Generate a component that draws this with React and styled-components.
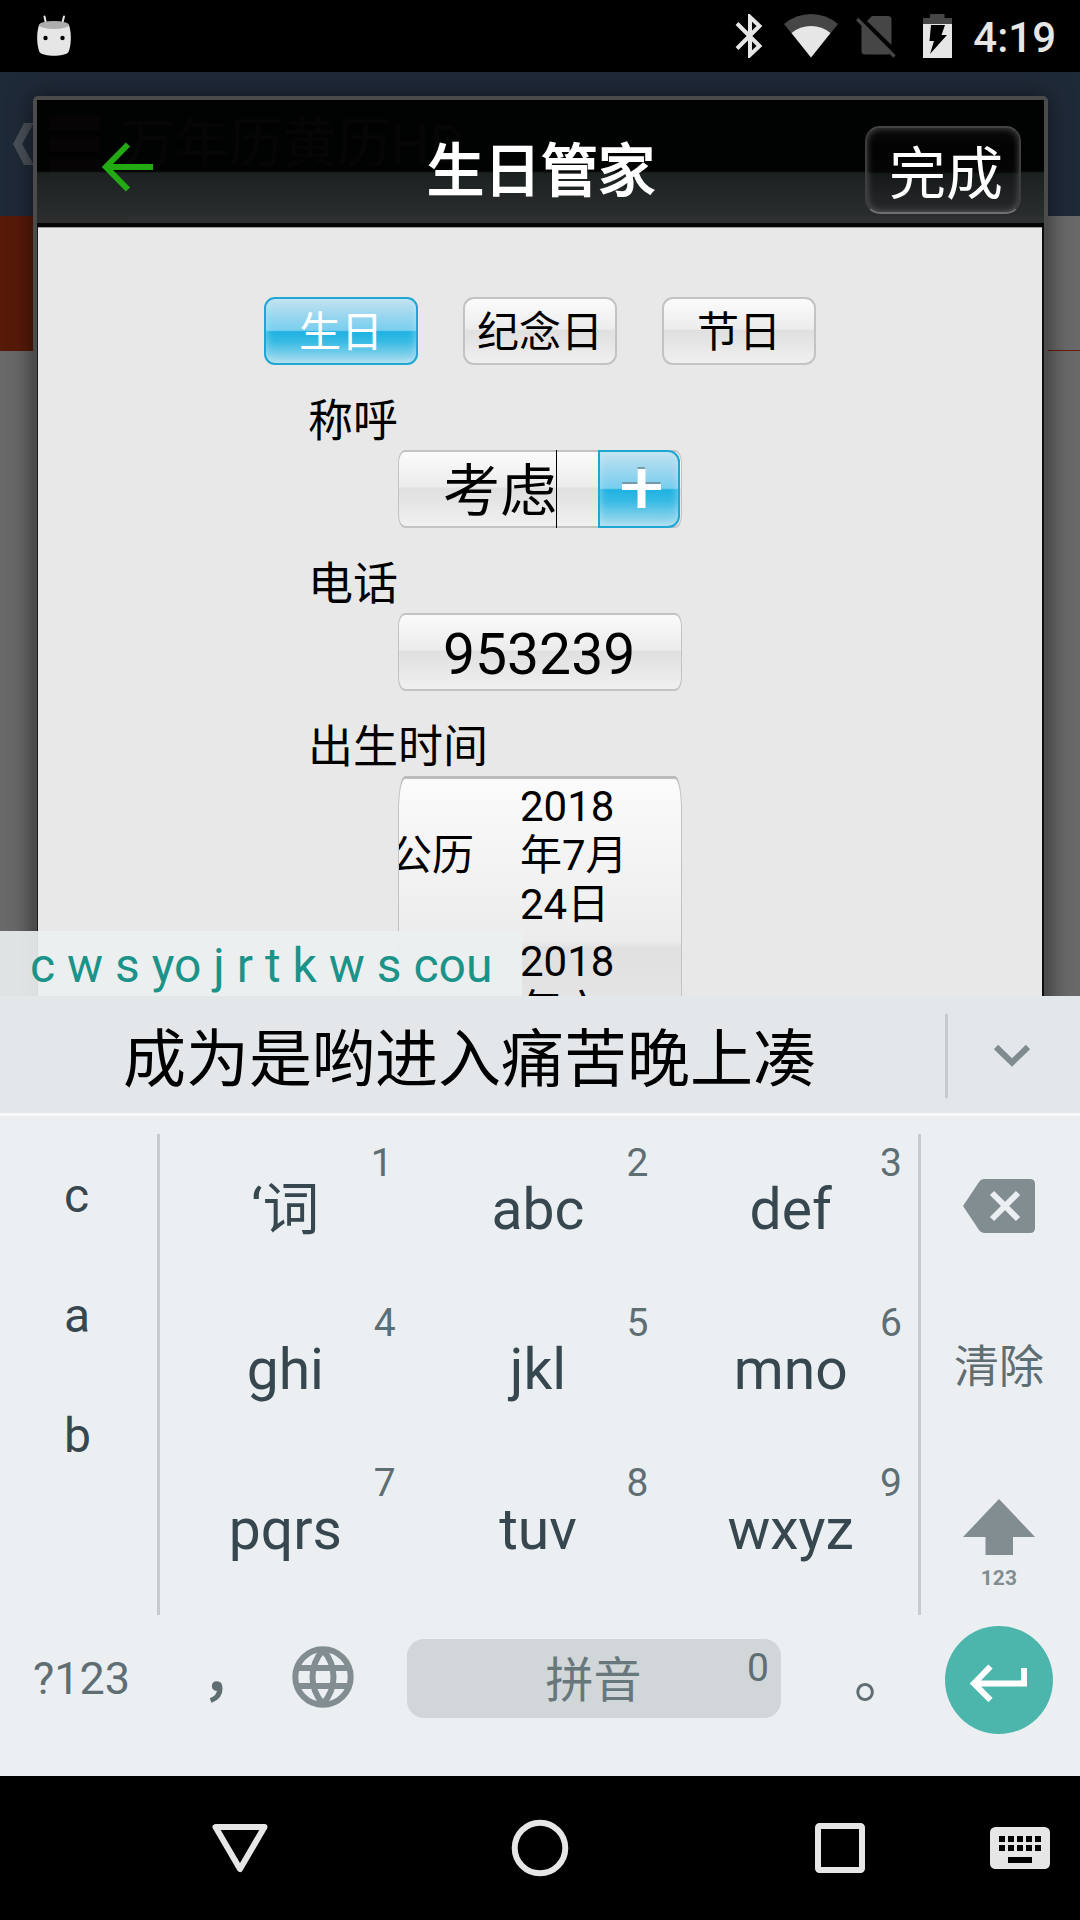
import React from "react";
import styled, { createGlobalStyle, css } from "styled-components";

const GlobalStyle = createGlobalStyle`
  * { box-sizing: border-box; }
  body {
    margin: 0;
    background: #000;
    font-family: Roboto, "Noto Sans CJK SC", sans-serif;
  }
  svg { display: block; flex: none; }
`;

/* ---------- screen ---------- */

const Screen = styled.div`
  width: 1080px;
  height: 1920px;
  display: flex;
  flex-direction: column;
  overflow: hidden;
  background: #000;
`;

const StatusBar = styled.header`
  height: 72px;
  flex: none;
  display: flex;
  align-items: center;
  justify-content: space-between;
  padding: 0 24px 0 36px;
  background: #000;
`;

const StatusIcons = styled.div`
  display: flex;
  align-items: center;
`;

const Clock = styled.span`
  margin-left: 21px;
  padding-top: 3px;
  font-size: 42px;
  line-height: 50px;
  font-weight: 500;
  color: #e6e6e6;
`;

const AppArea = styled.main`
  position: relative;
  height: 924px;
  flex: none;
  overflow: hidden;
  background: #696969;
`;

/* ---------- dimmed page behind the dialog ---------- */

const BackBar = styled.div`
  height: 144px;
  display: flex;
  align-items: center;
  padding-left: 12px;
  background: #1f2a38;
`;

const BackMenu = styled.div`
  display: flex;
  flex-direction: column;
  gap: 7px;
  width: 51px;
  margin-left: 15px;
`;

const BackMenuLine = styled.div`
  height: 15px;
  background: #a06060;
`;

const BackTitle = styled.div`
  margin-left: 21px;
  padding-top: 2px;
  font-size: 54px;
  line-height: 64px;
  color: #8a8a8a;
`;

const BackTabs = styled.div`
  height: 135px;
  display: flex;
  border-bottom: 1px solid #6a1c08;
`;

const BackTab = styled.div`
  width: 127px;
  height: 135px;
  background: #571a09;
`;

/* ---------- dialog ---------- */

const Dialog = styled.section`
  position: absolute;
  left: 33px;
  right: 32px;
  top: 24px;
  height: 1000px;
  border: 4px solid #4b4b4b;
  border-radius: 5px;
  padding: 0 2px 0 1px;
  display: flex;
  flex-direction: column;
  box-shadow: 0 0 24px rgba(0, 0, 0, 0.55);
`;

const DialogHeader = styled.div`
  height: 127px;
  flex: none;
  display: grid;
  grid-template-columns: 177px 1fr 177px;
  margin: 0 -2px 0 -1px;
  padding: 0 2px 0 1px;
  border-bottom: 4px solid #050505;
  background: linear-gradient(
    to bottom,
    rgba(0, 0, 0, 0.96) 0,
    rgba(0, 0, 0, 0.96) 71px,
    rgba(27, 32, 32, 0.96) 73px,
    rgba(44, 47, 48, 0.96) 123px
  );
`;

const BackButton = styled.div`
  padding: 42px 0 0 64px;
`;

const DialogTitle = styled.h1`
  margin: 0;
  padding: 37px 0 0 2px;
  font-size: 57px;
  line-height: 70px;
  font-weight: 400;
  text-align: center;
  color: #fff;
  -webkit-text-stroke: 2px #fff;
`;

const DoneButton = styled.button`
  justify-self: end;
  width: 156px;
  height: 88px;
  margin: 26px 21px 0 0;
  padding: 9px 0 0 6px;
  border: 2px solid #3c3d3e;
  border-top-color: #444;
  border-bottom-color: #6e7071;
  border-radius: 15px;
  background: linear-gradient(to bottom, #0a0a0a, #020202 25%, #060606 52%, #16191a 55%, #27292a);
  box-shadow: inset 0 0 7px rgba(150, 150, 150, 0.5);
  font: 400 57px/70px Roboto, "Noto Sans CJK SC", sans-serif;
  color: #fff;
`;

const DialogBody = styled.div`
  flex: 1;
  padding-top: 69px;
  border-top: 1px solid #9b9b9b;
  background: #e9e8e8;
  box-shadow: 2px 0 0 #0c0e0e, -1px 0 0 #1a1a1a;
`;

const glossLight = css`
  border: 2px solid #c3c3c3;
  background: linear-gradient(to bottom, #fbfbfb 0, #ececec 47%, #e0e0e0 49%, #e3e3e3 60%, #f0f0f0 100%);
`;

const glossBlue = css`
  border: 2px solid #1fa6d3;
  background: linear-gradient(to bottom, #c2e2f0 0, #9dd7ef 24%, #78ceef 49%, #1fb2e2 51%, #36bae4 66%, #a9dcee 100%);
  box-shadow: inset 0 0 9px rgba(200, 235, 248, 0.6);
`;

const Tabs = styled.div`
  display: flex;
  justify-content: center;
  gap: 45px;
`;

const Tab = styled.button`
  width: 154px;
  height: 68px;
  padding: 3px 0 0;
  border-radius: 11px;
  font: 400 42px/50px Roboto, "Noto Sans CJK SC", sans-serif;
  ${(p) => (p.$active ? glossBlue : glossLight)}
  color: ${(p) => (p.$active ? "#fff" : "#000")};
`;

const Form = styled.div`
  margin-left: 270px;
`;

const Label = styled.label`
  display: block;
  padding-top: 29px;
  font-size: 45px;
  line-height: 56px;
  color: #000;
`;

const Field = styled.div`
  ${glossLight}
  border-left-width: 1px;
  border-right-width: 1px;
  width: 284px;
  height: 78px;
  margin-left: 90px;
  display: flex;
  align-items: stretch;
  border-radius: 7px / 13px;
`;

const FieldText = styled.span`
  padding: 4px 0 0 44px;
  flex: 1;
  font-size: 57px;
  line-height: 72px;
  white-space: nowrap;
`;

const Typed = styled.span`
  display: inline-block;
  height: 78px;
  margin-top: -6px;
  padding-top: 6px;
  margin-right: -1px;
  width: 114px;
  border-right: 1px solid #000;
`;

const AddButton = styled.button`
  ${glossBlue}
  width: 82px;
  height: 78px;
  margin: -2px 1px -2px 0;
  padding: 0 0 3px 3px;
  flex: none;
  display: flex;
  align-items: center;
  justify-content: center;
  border-radius: 0 12px 12px 0;
`;

const DateField = styled(Field)`
  height: 350px;
  border-top: 3px solid #bcbcbc;
  border-radius: 7px / 34px;
  overflow: hidden;
`;

const CalendarKind = styled.div`
  width: 84px;
  margin: 56px 0 0 -9px;
  font-size: 42px;
  line-height: 42px;
  white-space: nowrap;
`;

const Dates = styled.div`
  width: 110px;
  margin-left: 46px;
  padding-top: 3px;
  display: flex;
  flex-direction: column;
  gap: 8px;
`;

const DateText = styled.div`
  font-size: 42px;
  line-height: 49px;
  white-space: nowrap;
`;

/* ---------- keyboard ---------- */

const Composing = styled.div`
  position: absolute;
  left: 0;
  bottom: 0;
  width: 522px;
  height: 65px;
  padding: 5px 0 0 30px;
  background: rgba(236, 240, 241, 0.91);
  font-size: 48px;
  line-height: 60px;
  color: #1b9389;
  white-space: nowrap;
`;

const Keyboard = styled.section`
  height: 780px;
  flex: none;
  display: flex;
  flex-direction: column;
  background: #ebeff2;
`;

const Candidates = styled.div`
  height: 120px;
  flex: none;
  display: flex;
  align-items: center;
  padding-top: 3px;
  border-bottom: 3px solid #f6f8f9;
  background: #e3e7ea;
`;

const CandidateText = styled.div`
  width: 945px;
  padding-top: 7px;
  padding-right: 6px;
  font-size: 63px;
  line-height: 80px;
  text-align: center;
  color: #000;
`;

const Rule = styled.div`
  width: 3px;
  height: ${(p) => p.$height}px;
  flex: none;
  background: #c6cbce;
`;

const Expand = styled.div`
  flex: 1;
  display: flex;
  justify-content: center;
  padding-right: 4px;
`;

const Pad = styled.div`
  height: 481px;
  margin-top: 18px;
  flex: none;
  display: grid;
  grid-template-columns: 157px 3px 758px 3px 159px;
`;

const SideLetters = styled.div`
  display: flex;
  flex-direction: column;
  padding: 2px 0 0 64px;
  font-size: 48px;
  line-height: 120px;
  color: #37474f;
`;

const Keys = styled.div`
  display: grid;
  grid-template-columns: repeat(3, 1fr);
  grid-auto-rows: 160px;
`;

const Key = styled.div`
  display: flex;
  flex-direction: column;
`;

const Hint = styled.span`
  height: 46px;
  padding-right: ${(p) => p.$inset}px;
  padding-top: 5px;
  text-align: right;
  font-size: 39px;
  line-height: 48px;
  color: #5f6e73;
`;

const KeyLabel = styled.span`
  padding-right: 2px;
  text-align: center;
  font-size: 57px;
  line-height: 60px;
  color: #37474f;
`;

const Actions = styled.div`
  display: grid;
  grid-template-rows: repeat(3, 160px);
  justify-items: center;
  padding-right: 3px;
`;

const Action = styled.div`
  display: flex;
  flex-direction: column;
  align-items: center;
  padding-top: ${(p) => p.$top}px;
  font-size: 45px;
  line-height: 60px;
  white-space: nowrap;
  color: #5f6e73;
`;

const ShiftCaption = styled.span`
  margin-top: 10px;
  font-size: 21px;
  line-height: 26px;
  font-weight: 700;
  letter-spacing: 0.2px;
  color: #818d90;
`;

const BottomRow = styled.div`
  flex: 1;
  display: grid;
  grid-template-columns: 161px 107px 110px 432px 115px 155px;
  align-items: start;
  padding-top: 11px;
  color: #5f6e73;
`;

const SymbolsKey = styled.div`
  padding: 23px 0 0 33px;
  font-size: 45px;
  line-height: 60px;
`;

const CommaKey = styled.div`
  padding: 14px 0 0 42px;
  font-family: "Noto Sans CJK SC", sans-serif;
  font-size: 57px;
  line-height: 60px;
  -webkit-text-stroke: 1.5px #5f6e73;
`;

const GlobeKey = styled.div`
  padding: 20px 0 0 24px;
`;

const SpaceKey = styled.div`
  width: 374px;
  height: 79px;
  margin: 13px 0 0 29px;
  display: grid;
  grid-template-columns: 1fr auto 1fr;
  border-radius: 17px;
  background: #d1d6d9;
`;

const SpaceLabel = styled.span`
  grid-column: 2;
  padding: 12px 1px 0 0;
  font-size: 48px;
  line-height: 60px;
  color: #68777c;
`;

const SpaceHint = styled.span`
  padding: 5px 12px 0 0;
  text-align: right;
  font-size: 39px;
  line-height: 48px;
  color: #5f6e73;
`;

const StopKey = styled.div`
  padding: 16px 0 0 44px;
  font-family: "Noto Sans CJK SC", sans-serif;
  font-size: 57px;
  line-height: 60px;
`;

const EnterKey = styled.button`
  width: 108px;
  height: 108px;
  margin-left: 20px;
  padding: 5px 0 0;
  border: 0;
  border-radius: 50%;
  display: flex;
  align-items: center;
  justify-content: center;
  background: #4db6ac;
`;

const NavBar = styled.nav`
  height: 144px;
  flex: none;
  display: grid;
  grid-template-columns: 90px 300px 300px 300px 60px 30px;
  align-items: center;
  justify-items: center;
  background: #000;
`;

const NavItem = styled.div`
  grid-column: ${(p) => p.$col};
`;

/* ---------- icons ---------- */

const RobotIcon = () => (
  <svg width="36" height="42" viewBox="0 0 36 42">
    <path d="M8.5 1.5L10.5 11M28 1.5L25.5 11" stroke="#e6e6e6" strokeWidth="2" strokeLinecap="round" />
    <path d="M3 10C0 19 1 31 3.500 37C7 42 29 42 32.500 37C35 31 36 19 33 10Z" fill="#e6e6e6" />
    <ellipse cx="18" cy="10" rx="15" ry="4" fill="#adadad" />
    <circle cx="9.500" cy="23" r="2.200" fill="#000" />
    <circle cx="26.500" cy="23" r="2.200" fill="#000" />
  </svg>
);

const BluetoothIcon = () => (
  <svg width="28" height="44" viewBox="0 0 28 44">
    <path d="M2 9.500L24.500 32L15 41V3L24.500 12L2 34.500" fill="none" stroke="#e6e6e6" strokeWidth="4" />
  </svg>
);

const WifiIcon = () => (
  <svg width="54" height="44" viewBox="0 0 54 44">
    <path d="M27 43.500L0 10Q12 0 27 0T54 10Z" fill="#464646" />
    <path d="M27 43.500L7.500 19Q16 12 27 12T46.500 19Z" fill="#e6e6e6" />
  </svg>
);

const NoSimIcon = () => (
  <svg width="40" height="44" viewBox="0 0 40 44">
    <path d="M16 2H32Q35.500 2 35.500 5.500V31L11 7Z" fill="#464646" />
    <path d="M5.500 11V37Q5.500 40.500 9 40.500H32Q34 40.500 34.500 39.500Z" fill="#464646" />
    <path d="M1.200 5L38.500 42.500" stroke="#464646" strokeWidth="3.200" />
  </svg>
);

const BatteryIcon = () => (
  <svg width="29" height="44" viewBox="0 0 29 44">
    <path d="M0 10V4H7V0H21.500V4H29V10Z" fill="#464646" />
    <path d="M0 10H29V44H0Z" fill="#e6e6e6" />
    <path d="M8 11H22L18.500 21H24L7 40L11 27H6.500Z" fill="#000" />
  </svg>
);

const ChevronBack = () => (
  <svg width="22" height="44" viewBox="0 0 22 44">
    <path d="M12 1H22L10 22L22 43H12L1 22Z" fill="#4b5058" />
  </svg>
);

const ArrowLeft = () => (
  <svg width="52" height="50" viewBox="0 0 52 50">
    <path d="M51 25H5M26 2.500L4 25L26 47.500" fill="none" stroke="#22a914" strokeWidth="6" />
  </svg>
);

const PlusIcon = () => (
  <svg width="42" height="44" viewBox="0 0 42 44">
    <path d="M17.500 1H25V16H40.500V22.500H25V40H17.500V22.500H2V16H17.500Z" fill="#6f8791" opacity=".75" />
    <path d="M17.500 3H25.500V18H41V24H25.500V42H17.500V24H2V18H17.500Z" fill="#fbfdfe" />
  </svg>
);

const ChevronDown = () => (
  <svg width="38" height="24" viewBox="0 0 38 24">
    <path d="M3 3L19 18.500L35 3" fill="none" stroke="#7f8b8e" strokeWidth="6" />
  </svg>
);

const BackspaceIcon = () => (
  <svg width="72" height="54" viewBox="0 0 72 54">
    <path d="M21 0H67Q72 0 72 5V49Q72 54 67 54H21Q18 54 16 51L0 27L16 3Q18 0 21 0Z" fill="#818d90" />
    <path d="M29 14L55 40M55 14L29 40" stroke="#ebeff2" strokeWidth="6" />
  </svg>
);

const ShiftIcon = () => (
  <svg width="72" height="56" viewBox="0 0 72 56">
    <path d="M36 0L72 38H50V56H22.500V38H0Z" fill="#818d90" />
  </svg>
);

const GlobeIcon = () => (
  <svg width="62" height="62" viewBox="0 0 62 62">
    <g fill="none" stroke="#818d90" strokeWidth="6">
      <circle cx="31" cy="31" r="27.700" />
      <path d="M5 22H57M5 40H57M31 4Q20.500 16 20.500 31T31 58M31 4Q41.500 16 41.500 31T31 58" />
    </g>
  </svg>
);

const EnterIcon = () => (
  <svg width="58" height="38" viewBox="0 0 58 38">
    <path d="M54 4V19.500H5M20.500 2.500L4 19.500L20.500 36" fill="none" stroke="#fff" strokeWidth="6" />
  </svg>
);

const NavBack = () => (
  <svg width="60" height="52" viewBox="0 0 60 52">
    <path d="M5.500 5H54.500L30 47Z" fill="none" stroke="#e6e6e6" strokeWidth="6" strokeLinejoin="round" />
  </svg>
);

const NavHome = () => (
  <svg width="58" height="58" viewBox="0 0 58 58">
    <circle cx="29" cy="29" r="25.300" fill="none" stroke="#e6e6e6" strokeWidth="6" />
  </svg>
);

const NavRecent = () => (
  <svg width="50" height="50" viewBox="0 0 50 50">
    <rect x="3" y="3" width="44" height="44" rx="1.500" fill="none" stroke="#e6e6e6" strokeWidth="6" />
  </svg>
);

const NavKeyboard = () => (
  <svg width="60" height="42" viewBox="0 0 60 42">
    <rect width="60" height="42" rx="5.500" fill="#e6e6e6" />
    {[9, 18].map((y) =>
      [9, 18, 27, 36, 45].map((x) => <rect key={`${x}-${y}`} x={x} y={y} width="6" height="6" fill="#000" />)
    )}
    <rect x="18" y="30" width="24" height="6" fill="#000" />
  </svg>
);

/* ---------- data ---------- */

const tabs = ["生日", "纪念日", "节日"];

const keys = [
  ["‘词", "1", 20],
  ["abc", "2", 17],
  ["def", "3", 16],
  ["ghi", "4", 17],
  ["jkl", "5", 17],
  ["mno", "6", 16],
  ["pqrs", "7", 17],
  ["tuv", "8", 17],
  ["wxyz", "9", 16],
];

const Gap = styled.span`
  width: ${(p) => p.$w}px;
`;

export default function App() {
  return (
    <Screen>
      <GlobalStyle />
      <StatusBar>
        <RobotIcon />
        <StatusIcons>
          <BluetoothIcon />
          <Gap $w={21} />
          <WifiIcon />
          <Gap $w={18} />
          <NoSimIcon />
          <Gap $w={27} />
          <BatteryIcon />
          <Clock>4:19</Clock>
        </StatusIcons>
      </StatusBar>

      <AppArea>
        <BackBar>
          <ChevronBack />
          <BackMenu>
            <BackMenuLine />
            <BackMenuLine />
            <BackMenuLine />
          </BackMenu>
          <BackTitle>万年历黄历HD</BackTitle>
        </BackBar>
        <BackTabs>
          <BackTab />
        </BackTabs>

        <Dialog>
          <DialogHeader>
            <BackButton>
              <ArrowLeft />
            </BackButton>
            <DialogTitle>生日管家</DialogTitle>
            <DoneButton>完成</DoneButton>
          </DialogHeader>
          <DialogBody>
            <Tabs>
              {tabs.map((t, i) => (
                <Tab key={t} $active={i === 0}>
                  {t}
                </Tab>
              ))}
            </Tabs>
            <Form>
              <Label>称呼</Label>
              <Field>
                <FieldText>
                  <Typed>考虑</Typed>
                </FieldText>
                <AddButton>
                  <PlusIcon />
                </AddButton>
              </Field>
              <Label>电话</Label>
              <Field>
                <FieldText>953239</FieldText>
              </Field>
              <Label>出生时间</Label>
              <DateField>
                <CalendarKind>公历</CalendarKind>
                <Dates>
                  <DateText>
                    2018
                    <br />
                    年7月
                    <br />
                    24日
                  </DateText>
                  <DateText>
                    2018
                    <br />
                    年六
                  </DateText>
                </Dates>
              </DateField>
            </Form>
          </DialogBody>
        </Dialog>

        <Composing>c w s yo j r t k w s cou</Composing>
      </AppArea>

      <Keyboard>
        <Candidates>
          <CandidateText>成为是哟进入痛苦晚上凑</CandidateText>
          <Rule $height={84} />
          <Expand>
            <ChevronDown />
          </Expand>
        </Candidates>
        <Pad>
          <SideLetters>
            <span>c</span>
            <span>a</span>
            <span>b</span>
          </SideLetters>
          <Rule $height={481} />
          <Keys>
            {keys.map(([label, hint, inset]) => (
              <Key key={hint}>
                <Hint $inset={inset}>{hint}</Hint>
                <KeyLabel>{label}</KeyLabel>
              </Key>
            ))}
          </Keys>
          <Rule $height={481} />
          <Actions>
            <Action $top={45}>
              <BackspaceIcon />
            </Action>
            <Action $top={44}>清除</Action>
            <Action $top={45}>
              <ShiftIcon />
              <ShiftCaption>123</ShiftCaption>
            </Action>
          </Actions>
        </Pad>
        <BottomRow>
          <SymbolsKey>?123</SymbolsKey>
          <CommaKey>，</CommaKey>
          <GlobeKey>
            <GlobeIcon />
          </GlobeKey>
          <SpaceKey>
            <SpaceLabel>拼音</SpaceLabel>
            <SpaceHint>0</SpaceHint>
          </SpaceKey>
          <StopKey>。</StopKey>
          <EnterKey>
            <EnterIcon />
          </EnterKey>
        </BottomRow>
      </Keyboard>

      <NavBar>
        <NavItem $col={2}>
          <NavBack />
        </NavItem>
        <NavItem $col={3}>
          <NavHome />
        </NavItem>
        <NavItem $col={4}>
          <NavRecent />
        </NavItem>
        <NavItem $col={5}>
          <NavKeyboard />
        </NavItem>
      </NavBar>
    </Screen>
  );
}
